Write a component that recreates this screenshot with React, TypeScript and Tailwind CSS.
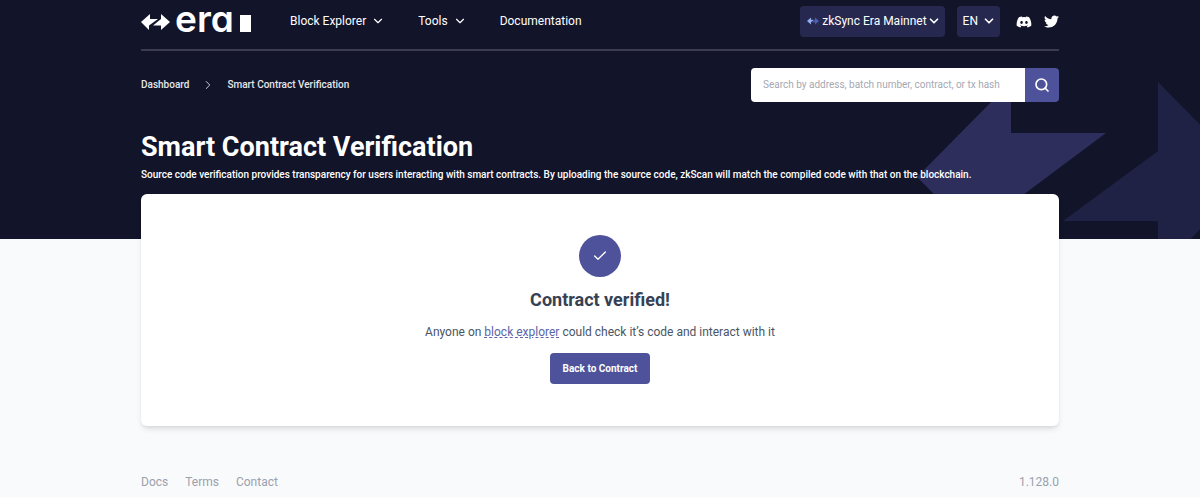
import React from "react";
import { Check, ChevronDown, ChevronRight, Search } from "lucide-react";
import { FaDiscord, FaTwitter } from "react-icons/fa";

interface NavItem {
  label: string;
  hasMenu: boolean;
}

const navItems: NavItem[] = [
  { label: "Block Explorer", hasMenu: true },
  { label: "Tools", hasMenu: true },
  { label: "Documentation", hasMenu: false },
];

const footerLinks = ["Docs", "Terms", "Contact"];

const Logo = () => (
  <a href="#" aria-label="zkSync Era" className="flex w-[110px] items-center">
    <svg viewBox="0 0 110 24" className="h-6 w-[110px] overflow-visible" fill="#ffffff">
      <path d="M0 12 9 4v5h8L8 15.500V20Z" />
      <path d="M29 12 20 4v5l-8 6.500h8V20Z" />
      <text
        x="34"
        y="22"
        fontSize="37"
        fontWeight="600"
        fontFamily="Inter, sans-serif"
        style={{ fontFeatureSettings: '"cv11"' }}
      >
        era
      </text>
      <rect x="99" y="5" width="11" height="17" />
    </svg>
  </a>
);

const NetworkIcon = () => (
  <svg viewBox="0 0 12 8" className="h-2 w-3">
    <path d="M0 4 4 0.500v2.300h3L4 5.200v2.300Z" fill="#8fb0f0" />
    <path d="M12 4 8 0.500v2.300L5 5.200h3v2.300Z" fill="#4e5fae" />
  </svg>
);

const Header = () => (
  <header className="flex h-[51px] items-start border-b-2 border-[#3b3c52] pt-[6px]">
    <div className="flex h-[31px] flex-1 items-center">
      <Logo />
      <nav className="ml-[39px] flex items-center gap-[33px] pb-0.5">
        {navItems.map((item) =>
          item.hasMenu ? (
            <button key={item.label} type="button" className="flex items-center gap-[5px]">
              {item.label}
              <ChevronDown className="h-3.5 w-3.5" />
            </button>
          ) : (
            <a key={item.label} href="#">
              {item.label}
            </a>
          )
        )}
      </nav>
      <div className="ml-auto flex items-center gap-3">
        <button
          type="button"
          className="flex h-[31px] items-center rounded bg-[#27284f] pr-1 pb-0.5 pl-[7px]"
        >
          <NetworkIcon />
          <span className="ml-[3px]">zkSync Era Mainnet</span>
          <ChevronDown className="h-3.5 w-3.5" strokeWidth={3} />
        </button>
        <button
          type="button"
          className="flex h-[31px] items-center gap-1 rounded bg-[#27284f] pr-1 pb-0.5 pl-[6px]"
        >
          EN
          <ChevronDown className="h-3.5 w-3.5" strokeWidth={3} />
        </button>
        <div className="ml-1 flex items-center gap-3">
          <a href="#" aria-label="Discord">
            <FaDiscord className="h-4 w-4" />
          </a>
          <a href="#" aria-label="Twitter">
            <FaTwitter className="h-[15px] w-[15px]" />
          </a>
        </div>
      </div>
    </div>
  </header>
);

const SearchForm = () => (
  <form
    className="flex h-[34px] w-[308px] overflow-hidden rounded"
    onSubmit={(e) => e.preventDefault()}
  >
    <input
      type="text"
      aria-label="Search"
      placeholder="Search by address, batch number, contract, or tx hash"
      className="min-w-0 flex-1 bg-white px-3 text-[10px] text-gray-700 outline-none placeholder:text-[#a5a8b3]"
    />
    <button
      type="submit"
      aria-label="Submit search"
      className="flex w-[34px] items-center justify-center bg-[#4e529a]"
    >
      <Search className="h-4 w-4" strokeWidth={2.5} />
    </button>
  </form>
);

const BannerArrows = () => (
  <svg
    viewBox="0 0 300 239"
    className="absolute top-0 right-0 h-[239px] w-[300px]"
    aria-hidden="true"
  >
    <path d="M17 177 111 82v51h95l-95 71v68Z" fill="#2d2e5b" />
    <path d="M258 82v69l-95 70h95v51l94-95Z" fill="#1f2245" />
  </svg>
);

export default function App() {
  return (
    <div className="min-h-screen bg-[#f9fafc] font-[Roboto,sans-serif] text-[12px] leading-4">
      <div className="relative overflow-hidden bg-[#12142a] pb-[45px] text-white">
        <BannerArrows />
        <div className="relative mx-auto w-full max-w-[918px]">
          <Header />
          <div className="mt-[17px] flex items-center justify-between">
            <nav
              aria-label="Breadcrumb"
              className="flex items-center gap-3 text-[10px] font-medium text-gray-200"
            >
              <a href="#">Dashboard</a>
              <ChevronRight className="h-3.5 w-3.5" strokeWidth={1.5} />
              <span>Smart Contract Verification</span>
            </nav>
            <SearchForm />
          </div>
          <h1 className="mt-[29px] text-[27px] leading-8 font-bold">
            Smart Contract Verification
          </h1>
          <p className="mt-1 pb-[11px] text-[10px] font-medium">
            Source code verification provides transparency for users interacting with smart
            contracts. By uploading the source code, zkScan will match the compiled code with that
            on the blockchain.
          </p>
        </div>
      </div>

      <main className="relative mx-auto -mt-[45px] w-full max-w-[918px]">
        <section className="flex flex-col items-center rounded-md bg-white pt-[41px] pb-[42px] shadow-md">
          <div className="flex h-[42px] w-[42px] items-center justify-center rounded-full bg-[#4e529a] text-white">
            <Check className="h-4 w-4" />
          </div>
          <h2 className="mt-[11px] text-[18px] leading-6 font-bold text-gray-700">
            Contract verified!
          </h2>
          <p className="mt-3 text-gray-600">
            Anyone on{" "}
            <a href="#" className="text-[#5a66a8] underline decoration-dashed">
              block explorer
            </a>{" "}
            could check it’s code and interact with it
          </p>
          <button
            type="button"
            className="mt-[13px] h-[31px] rounded bg-[#4e529a] px-[13px] text-[10px] font-bold text-white"
          >
            Back to Contract
          </button>
        </section>
      </main>

      <footer className="mx-auto mt-12 flex w-full max-w-[918px] justify-between text-gray-400">
        <div className="flex gap-[17px]">
          {footerLinks.map((link) => (
            <a key={link} href="#">
              {link}
            </a>
          ))}
        </div>
        <span>1.128.0</span>
      </footer>
    </div>
  );
}
